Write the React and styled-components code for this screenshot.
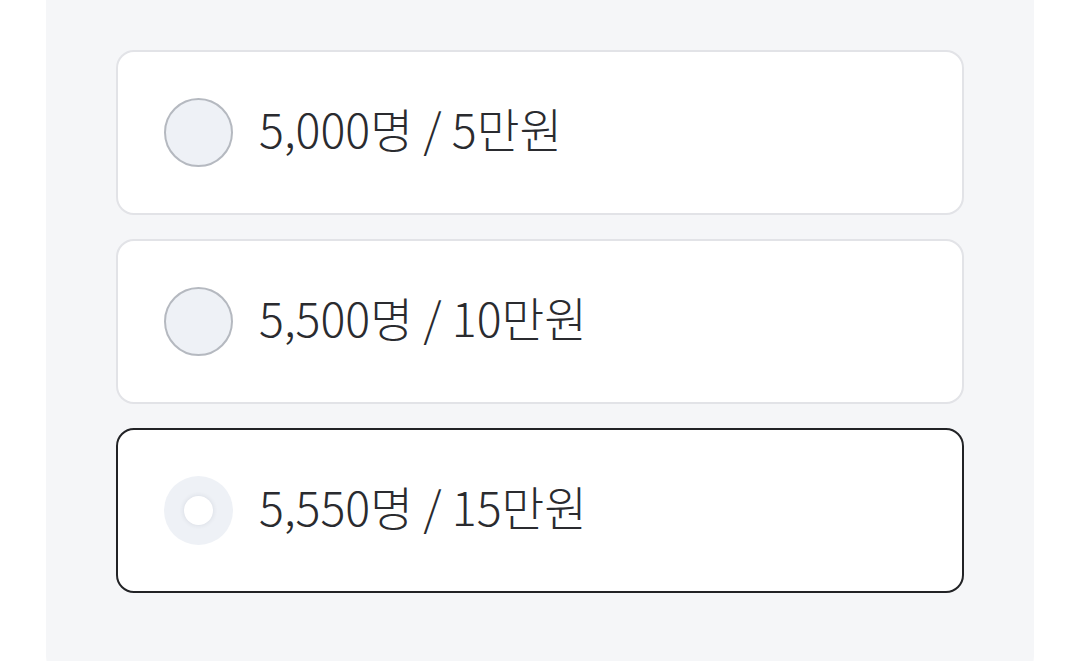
import React, { useState } from 'react';
import styled, { createGlobalStyle } from 'styled-components';

const GlobalStyle = createGlobalStyle`
  html, body {
    margin: 0;
    padding: 0;
    background: #ffffff;
    overflow: hidden;
  }
  body {
    font-family: "Noto Sans CJK KR", "Noto Sans", sans-serif;
  }
`;

const Panel = styled.div`
  margin: 0 46px;
  height: 680px;
  box-sizing: border-box;
  padding: 50px 70px;
  background: #f5f6f8;
  border-radius: 0 0 24px 24px;
  display: flex;
  flex-direction: column;
  gap: 24px;
`;

const Option = styled.label`
  display: flex;
  align-items: center;
  gap: 26px;
  height: 165px;
  box-sizing: border-box;
  padding: 0 46px;
  background: #ffffff;
  border: ${p => (p.$selected ? '2px solid #222326' : '2px solid #e2e3e7')};
  border-radius: 18px;
  cursor: pointer;
`;

const Radio = styled.span`
  flex: none;
  width: 69px;
  height: 69px;
  box-sizing: border-box;
  border-radius: 50%;
  background: #eef1f6;
  border: ${p => (p.$selected ? 'none' : '2px solid #b5b9c0')};
  display: flex;
  align-items: center;
  justify-content: center;
`;

const Dot = styled.span`
  width: 29px;
  height: 29px;
  border-radius: 50%;
  background: #ffffff;
  box-shadow: 0 0 5px rgba(40, 50, 70, 0.12);
`;

const Label = styled.span`
  font-size: 46.5px;
  font-weight: 300;
  line-height: 1.4;
  padding-bottom: 10px;
  color: #2a2b2f;
  letter-spacing: 0;
`;

const options = [
  '5,000명 / 5만원',
  '5,500명 / 10만원',
  '5,550명 / 15만원',
];

export default function App() {
  const [selected, setSelected] = useState(2);
  return (
    <>
      <GlobalStyle />
      <Panel>
        {options.map((text, i) => (
          <Option key={i} $selected={selected === i} onClick={() => setSelected(i)}>
            <Radio $selected={selected === i}>{selected === i && <Dot />}</Radio>
            <Label>{text}</Label>
          </Option>
        ))}
      </Panel>
    </>
  );
}
